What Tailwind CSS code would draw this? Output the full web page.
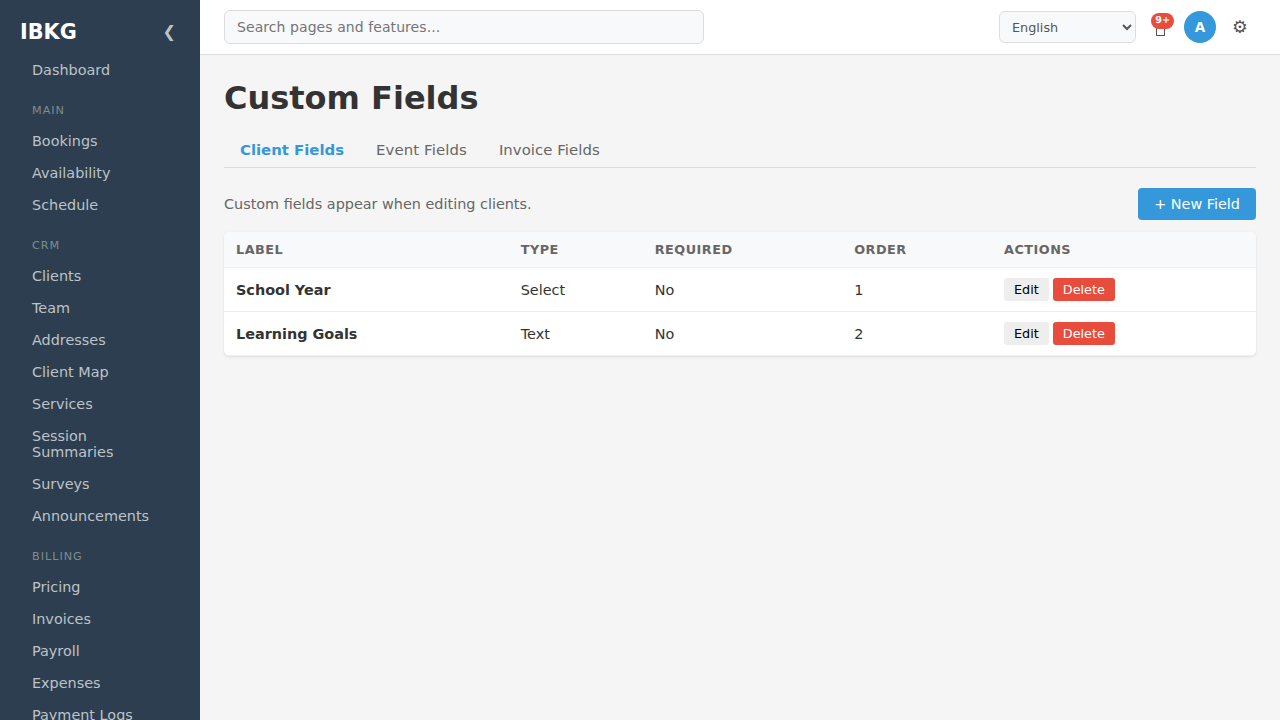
<!DOCTYPE html>
<html lang="en">
<head>
    <meta charset="UTF-8">
    <meta name="viewport" content="width=device-width, initial-scale=1.0">
    <title>Custom Fields - IBKG</title>
    <script src="https://cdn.jsdelivr.net/npm/@tailwindcss/browser@4"></script>
</head>
<body class="flex h-screen overflow-hidden bg-[#f5f5f5] text-[#333] font-['DejaVu_Sans',sans-serif] leading-[normal]">
    <aside class="w-[200px] shrink-0 overflow-hidden bg-[#2c3e50] text-[#bdc3c7]">
        <div class="flex items-center justify-between h-[54px] pt-[9px] pl-5 pr-6">
            <span class="text-[20.8px] font-bold text-white">IBKG</span>
            <button class="text-base">❮</button>
        </div>
        <nav class="flex flex-col text-[14.4px]">
            <a href="#" class="py-2 px-8">Dashboard</a>

            <h3 class="pt-[18px] pb-2 px-8 text-[11.2px] tracking-[1px] text-[#7f8c8d]">MAIN</h3>
            <a href="#" class="py-2 px-8">Bookings</a>
            <a href="#" class="py-2 px-8">Availability</a>
            <a href="#" class="py-2 px-8">Schedule</a>

            <h3 class="pt-[18px] pb-2 px-8 text-[11.2px] tracking-[1px] text-[#7f8c8d]">CRM</h3>
            <a href="#" class="py-2 px-8">Clients</a>
            <a href="#" class="py-2 px-8">Team</a>
            <a href="#" class="py-2 px-8">Addresses</a>
            <a href="#" class="py-2 px-8">Client Map</a>
            <a href="#" class="py-2 px-8">Services</a>
            <a href="#" class="py-2 px-8">Session Summaries</a>
            <a href="#" class="py-2 px-8">Surveys</a>
            <a href="#" class="py-2 px-8">Announcements</a>

            <h3 class="pt-[18px] pb-2 px-8 text-[11.2px] tracking-[1px] text-[#7f8c8d]">BILLING</h3>
            <a href="#" class="py-2 px-8">Pricing</a>
            <a href="#" class="py-2 px-8">Invoices</a>
            <a href="#" class="py-2 px-8">Payroll</a>
            <a href="#" class="py-2 px-8">Expenses</a>
            <a href="#" class="py-2 px-8">Payment Logs</a>
        </nav>
    </aside>

    <div class="flex-1 min-w-0">
        <header class="flex items-center justify-between h-[55px] px-6 bg-white border-b border-[#ddd]">
            <input type="text" placeholder="Search pages and features..." class="w-[480px] h-[34px] px-3 text-[14px] tracking-[0.07px] bg-[#f8f9fa] border border-[#ddd] rounded-md placeholder:text-[#757575]">
            <div class="flex items-center text-[#555]">
                <select class="w-[137px] h-8 px-2 text-[12.8px] bg-[#f8f9fa] border border-[#ddd] rounded-md">
                    <option>English</option>
                </select>
                <button class="relative flex items-end justify-center w-8 h-8 ml-2 pb-[7px]">
                    <span class="w-[9px] h-3 border border-[#555]"></span>
                    <span class="absolute top-[2px] right-[2px] h-4 px-1 rounded-lg bg-[#e74c3c] text-white text-[9.6px] leading-4 font-bold [text-rendering:geometricPrecision]">9+</span>
                </button>
                <span class="flex items-center justify-center w-8 h-8 ml-2 rounded-full bg-[#3498db] text-white text-[13.6px] font-bold">A</span>
                <button class="w-8 h-8 ml-2 text-[17.6px]">⚙</button>
            </div>
        </header>

        <main class="p-6">
            <h1 class="pt-px text-[32px] font-bold leading-[37px]">Custom Fields</h1>

            <div class="flex mt-[15px] border-b border-[#ddd] text-[14.88px] leading-[18px] text-[#666]">
                <a href="#" class="pt-[9px] pb-2 px-4 font-bold text-[#3498db]">Client Fields</a>
                <a href="#" class="pt-[9px] pb-2 px-4 tracking-[0.12px]">Event Fields</a>
                <a href="#" class="pt-[9px] pb-2 px-4 tracking-[0.06px]">Invoice Fields</a>
            </div>

            <div class="flex items-center justify-between mt-5 mb-3">
                <p class="text-[14.4px] text-[#666]">Custom fields appear when editing clients.</p>
                <button class="h-8 px-4 rounded bg-[#3498db] text-white text-[14.4px]">+ New Field</button>
            </div>

            <div class="overflow-hidden rounded-md bg-white shadow-[0_1px_3px_rgba(0,0,0,0.1)]">
                <table class="w-full table-fixed border-separate border-spacing-0 text-left text-[14.4px]">
                    <colgroup>
                        <col class="w-[284.7px]">
                        <col class="w-[134px]">
                        <col class="w-[199.5px]">
                        <col class="w-[149.8px]">
                        <col class="w-[264px]">
                    </colgroup>
                    <thead class="bg-[#f8f9fa] text-[12.8px] tracking-[0.5px] text-[#666]">
                        <tr class="h-9">
                            <th class="px-3 border-b border-[#eee]">LABEL</th>
                            <th class="px-3 border-b border-[#eee]">TYPE</th>
                            <th class="px-3 border-b border-[#eee]">REQUIRED</th>
                            <th class="px-3 border-b border-[#eee]">ORDER</th>
                            <th class="px-3 border-b border-[#eee]">ACTIONS</th>
                        </tr>
                    </thead>
                    <tbody>
                        <tr class="h-11">
                            <td class="px-3 border-b border-[#eee] font-bold">School Year</td>
                            <td class="px-3 border-b border-[#eee]">Select</td>
                            <td class="px-3 border-b border-[#eee]">No</td>
                            <td class="px-3 border-b border-[#eee]">1</td>
                            <td class="px-3 border-b border-[#eee]">
                                <div class="flex gap-1 text-[12.8px]">
                                    <button class="py-1 px-2.5 rounded-[3px] bg-[#eee] text-black">Edit</button>
                                    <button class="py-1 px-2.5 rounded-[3px] bg-[#e74c3c] text-white">Delete</button>
                                </div>
                            </td>
                        </tr>
                        <tr class="h-11">
                            <td class="px-3 border-b border-[#eee] font-bold">Learning Goals</td>
                            <td class="px-3 border-b border-[#eee]">Text</td>
                            <td class="px-3 border-b border-[#eee]">No</td>
                            <td class="px-3 border-b border-[#eee]">2</td>
                            <td class="px-3 border-b border-[#eee]">
                                <div class="flex gap-1 text-[12.8px]">
                                    <button class="py-1 px-2.5 rounded-[3px] bg-[#eee] text-black">Edit</button>
                                    <button class="py-1 px-2.5 rounded-[3px] bg-[#e74c3c] text-white">Delete</button>
                                </div>
                            </td>
                        </tr>
                    </tbody>
                </table>
            </div>
        </main>
    </div>
</body>
</html>
